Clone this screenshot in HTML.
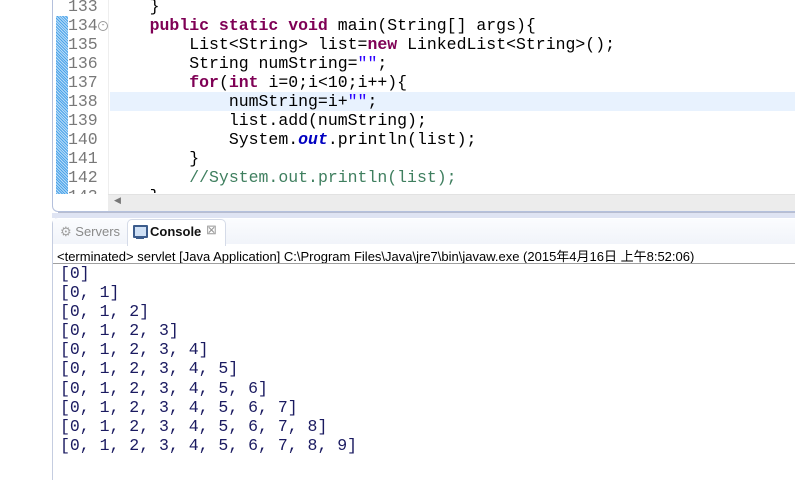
<!DOCTYPE html>
<html><head><meta charset="utf-8"><style>
body{margin:0;width:795px;height:480px;background:#fff;position:relative;overflow:hidden;font-family:"Liberation Mono",monospace}
.abs{position:absolute}
.code{font-family:"Liberation Mono","Noto Sans CJK SC",monospace;font-size:16.5px;white-space:pre;line-height:19px}
.ln{color:#787878}
.kw{color:#7f0055;font-weight:bold}
.str{color:#2a00ff}
.cm{color:#3f7f5f}
.fld{color:#0000c0;font-weight:bold;font-style:italic}
</style></head><body>
<!-- editor frame -->
<div class="abs" style="left:52px;top:-5px;width:750px;height:216px;border-left:1px solid #b4c0dc;border-bottom:1px solid #b4c0dc;border-radius:0 0 0 6px"></div>
<!-- change bar -->
<div class="abs" style="left:56px;top:16px;width:12px;height:178px;background:repeating-linear-gradient(45deg,#4aa3ea 0 1px,#b9dcf7 1px 2px)"></div>
<div class="abs" style="left:108px;top:0;width:1px;height:194px;background:#eee"></div>
<!-- highlight -->
<div class="abs" style="left:110px;top:92px;width:685px;height:19px;background:#e8f2fe"></div>
<div class="abs" style="left:68px;top:-3px;height:197px;overflow:hidden"><div class="code ln">133
134
135
136
137
138
139
140
141
142
143</div></div>
<div class="abs" style="left:98px;top:21px;width:8px;height:8px;border:1px solid #999;border-radius:50%;font-size:8px;line-height:8px;text-align:center;color:#777">-</div>
<div class="abs" style="left:110px;top:-3px;height:196px;overflow:hidden"><div class="code">    }
    <span class="kw">public static void</span> main(String[] args){
        List&lt;String&gt; list=<span class="kw">new</span> LinkedList&lt;String&gt;();
        String numString=<span class="str">""</span>;
        <span class="kw">for</span>(<span class="kw">int</span> i=0;i&lt;10;i++){
            numString=i+<span class="str">""</span>;
            list.add(numString);
            System.<span class="fld">out</span>.println(list);
        }
        <span class="cm">//System.out.println(list);</span>
    }</div></div>
<!-- scrollbar -->
<div class="abs" style="left:108px;top:194px;width:687px;height:16px;background:#ececec;border-top:1px solid #e2e2e2"></div>
<div class="abs" style="left:114px;top:195px;font-size:9px;color:#777;font-family:'Liberation Sans',sans-serif">◀</div>
<!-- band -->
<div class="abs" style="left:58px;top:212px;width:737px;height:1px;background:#b8bdd0"></div>
<div class="abs" style="left:52px;top:213px;width:743px;height:5px;background:#dfe4f3"></div>
<!-- console panel -->
<div class="abs" style="left:52px;top:218px;width:743px;height:262px;border-left:1px solid #c5cde0;border-radius:6px 0 0 0;background:#fff"></div>
<div class="abs" style="left:53px;top:219px;width:742px;height:25px;background:linear-gradient(#fbfcfe,#f1f4fa)"></div>
<div class="abs" style="left:60px;top:224px;font:13px 'Liberation Sans',sans-serif;color:#8a8a8a"><span style="color:#a0a0a0">⚙</span> Servers</div>
<div class="abs" style="left:127px;top:219px;width:97px;height:26px;background:#fff;border:1px solid #d5dbe8;border-bottom:none;border-radius:5px 5px 0 0"></div>
<div class="abs" style="left:133px;top:225px;width:11px;height:9px;border:2px solid #3c5c8c;border-radius:1px;background:#cfe0f5"></div>
<div class="abs" style="left:136px;top:237px;width:8px;height:2px;background:#3c5c8c"></div>
<div class="abs" style="left:150px;top:224px;font:bold 13px 'Liberation Sans',sans-serif;color:#111">Console</div>
<div class="abs" style="left:206px;top:222px;font:13px 'Liberation Sans',sans-serif;color:#999">⊠</div>
<div class="abs" style="left:57px;top:246px;font:13px 'Liberation Sans','Noto Sans CJK SC',sans-serif;color:#000;white-space:nowrap">&lt;terminated&gt; servlet [Java Application] C:\Program Files\Java\jre7\bin\javaw.exe (2015年4月16日 上午8:52:06)</div>
<div class="abs" style="left:53px;top:263px;width:742px;height:1px;background:#a0a0a0"></div>
<div class="abs code" style="left:60px;top:264px;color:#1a1a60;line-height:19.1px">[0]
[0, 1]
[0, 1, 2]
[0, 1, 2, 3]
[0, 1, 2, 3, 4]
[0, 1, 2, 3, 4, 5]
[0, 1, 2, 3, 4, 5, 6]
[0, 1, 2, 3, 4, 5, 6, 7]
[0, 1, 2, 3, 4, 5, 6, 7, 8]
[0, 1, 2, 3, 4, 5, 6, 7, 8, 9]</div>
</body></html>
